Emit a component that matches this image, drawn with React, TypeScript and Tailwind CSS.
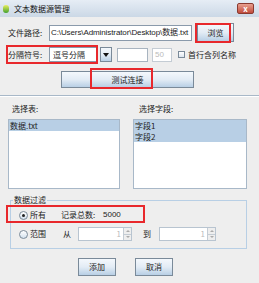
import React from "react";

const field = "bg-white border border-[#8a9aab] h-[16px] flex items-center";
const btn =
  "border border-[#7a8a99] bg-gradient-to-b from-[#f4f8fc] via-[#e3ecf5] to-[#b8cfe5] flex items-center justify-center text-[8px] text-[#222]";

function Radio({ checked }: { checked?: boolean }) {
  return (
    <span className="w-[9px] h-[9px] rounded-full border border-[#7a8a99] bg-gradient-to-b from-white to-[#d4e1ee] flex items-center justify-center">
      {checked && <span className="w-[3px] h-[3px] rounded-full bg-[#222]" />}
    </span>
  );
}

function Spinner({ w }: { w: string }) {
  return (
    <div className={`flex h-[14px] border border-[#b8c4d0] bg-white ${w}`}>
      <div className="flex-1 text-right pr-[2px] text-[#bbb] leading-[12px]">1</div>
      <div className="w-[8px] flex flex-col border-l border-[#c4ccd4]">
        <div className="flex-1 bg-[#eeeeee] border-b border-[#c4ccd4] flex items-center justify-center">
          <span className="w-0 h-0 border-l-[2px] border-r-[2px] border-b-[2px] border-l-transparent border-r-transparent border-b-[#aaa]" />
        </div>
        <div className="flex-1 bg-[#eeeeee] flex items-center justify-center">
          <span className="w-0 h-0 border-l-[2px] border-r-[2px] border-t-[2px] border-l-transparent border-r-transparent border-t-[#aaa]" />
        </div>
      </div>
    </div>
  );
}

export default function App() {
  return (
    <div className="w-[259px] h-[283px] bg-[#eeeeee] relative overflow-hidden text-[8px] text-[#222] font-['Noto_Sans_CJK_SC','Liberation_Sans',sans-serif] leading-none">
      {/* title bar */}
      <div className="h-[17px] flex items-center pl-[3px] pr-[5px] bg-gradient-to-b from-[#e6edf5] to-[#cbd8e6]">
        <span className="w-[6px] h-[8px] rounded-full bg-gradient-to-b from-[#e8f060] to-[#3aa030]" />
        <span className="ml-[5px] text-[#111]">文本数据源管理</span>
        <span className="ml-auto w-[17px] h-[11px] rounded-[2px] border border-[#8a3a30] bg-gradient-to-b from-[#e8a090] to-[#c04a3c] text-white text-[8px] font-bold flex items-center justify-center">
          x
        </span>
      </div>

      {/* file path */}
      <div className="mt-[6px] h-[19px] flex items-center pl-[8px]">
        <span className="w-[41px]">文件路径:</span>
        <div className={`${field} w-[143px] overflow-hidden pl-[1px] border-[#8a9aab]`}>
          <span className="whitespace-nowrap font-['Liberation_Sans','Noto_Sans_CJK_SC',sans-serif] text-[8px] tracking-[-0.1px]">
            C:\Users\Administrator\Desktop\数据.txt
          </span>
        </div>
        <div className={`${btn} ml-[5px] w-[37px] h-[19px]`}>浏览</div>
      </div>

      {/* separator row */}
      <div className="mt-[4px] h-[17px] flex items-center pl-[8px]">
        <span className="w-[41px]">分隔符号:</span>
        <div className="bg-white border border-[#8a9aab] h-[15px] w-[49px] flex items-center pl-[3px]">逗号分隔</div>
        <div className={`${btn} ml-[2px] w-[12px] h-[15px]`}>
          <span className="w-0 h-0 border-l-[3px] border-r-[3px] border-t-[4px] border-l-transparent border-r-transparent border-t-[#111]" />
        </div>
        <div className="ml-[5px] w-[31px] h-[14px] bg-white border border-[#a8b4c0]" />
        <div className="ml-[4px] w-[20px] h-[14px] bg-white border border-[#c4ccd4] text-[#bbb] flex items-center pl-[2px] font-['Liberation_Sans',sans-serif]">
          50
        </div>
        <span className="ml-[6px] w-[7px] h-[7px] border border-[#7a8a99] bg-gradient-to-b from-white to-[#dde6ef]" />
        <span className="ml-[3px]">首行含列名称</span>
      </div>

      {/* test connection */}
      <div className="mt-[8px] h-[17px] flex pl-[61px]">
        <div className={`${btn} w-[133px] h-[17px]`}>测试连接</div>
      </div>

      <div className="mt-[7px] h-px bg-[#a8b8c8]" />
      <div className="h-px bg-white" />

      {/* list labels */}
      <div className="mt-[6px] h-[12px] flex items-center">
        <span className="ml-[12px] w-[127px]">选择表:</span>
        <span>选择字段:</span>
      </div>

      {/* lists */}
      <div className="mt-[4px] h-[70px] flex pl-[8px] gap-[13px]">
        <div className="w-[112px] h-full bg-white border border-[#a8b8c8]">
          <div className="h-[11px] bg-[#b8cfe5] flex items-center pl-[1px]">数据.txt</div>
        </div>
        <div className="w-[114px] h-full bg-white border border-[#a8b8c8]">
          <div className="bg-[#b8cfe5] pl-[1px]">
            <div className="h-[11px] flex items-center">字段1</div>
            <div className="h-[11px] flex items-center">字段2</div>
          </div>
        </div>
      </div>

      {/* data filter group */}
      <div className="mt-[11px] ml-[10px] w-[237px] h-[49px] border border-[#b8cfe5] relative">
        <span className="absolute left-[2px] top-[-5px] px-[1px] bg-[#eeeeee]">数据过滤</span>
        <div className="mt-[8px] h-[12px] flex items-center pl-[8px]">
          <Radio checked />
          <span className="ml-[2px] w-[31px]">所有</span>
          <span className="w-[42px]">记录总数:</span>
          <span className="font-['Liberation_Sans',sans-serif]">5000</span>
        </div>
        <div className="mt-[6px] h-[14px] flex items-center pl-[8px]">
          <Radio />
          <span className="ml-[2px] w-[33px]">范围</span>
          <span className="w-[15px]">从</span>
          <Spinner w="w-[54px]" />
          <span className="ml-[11px] w-[16px]">到</span>
          <Spinner w="w-[57px]" />
        </div>
      </div>

      {/* buttons */}
      <div className="mt-[9px] flex pl-[78px] gap-[19px]">
        <div className={`${btn} w-[38px] h-[18px] border-[#5a6a7a]`}>添加</div>
        <div className={`${btn} w-[38px] h-[18px]`}>取消</div>
      </div>

      {/* annotation boxes */}
      <div className="absolute left-[195px] top-[23px] w-[36px] h-[20px] border-2 border-[#e8282c]" />
      <div className="absolute left-[6px] top-[45px] w-[92px] h-[19px] border-2 border-[#e8282c]" />
      <div className="absolute left-[90px] top-[68px] w-[63px] h-[21px] border-2 border-[#e8282c]" />
      <div className="absolute left-[6px] top-[205px] w-[139px] h-[18px] border-2 border-[#e8282c]" />
    </div>
  );
}
